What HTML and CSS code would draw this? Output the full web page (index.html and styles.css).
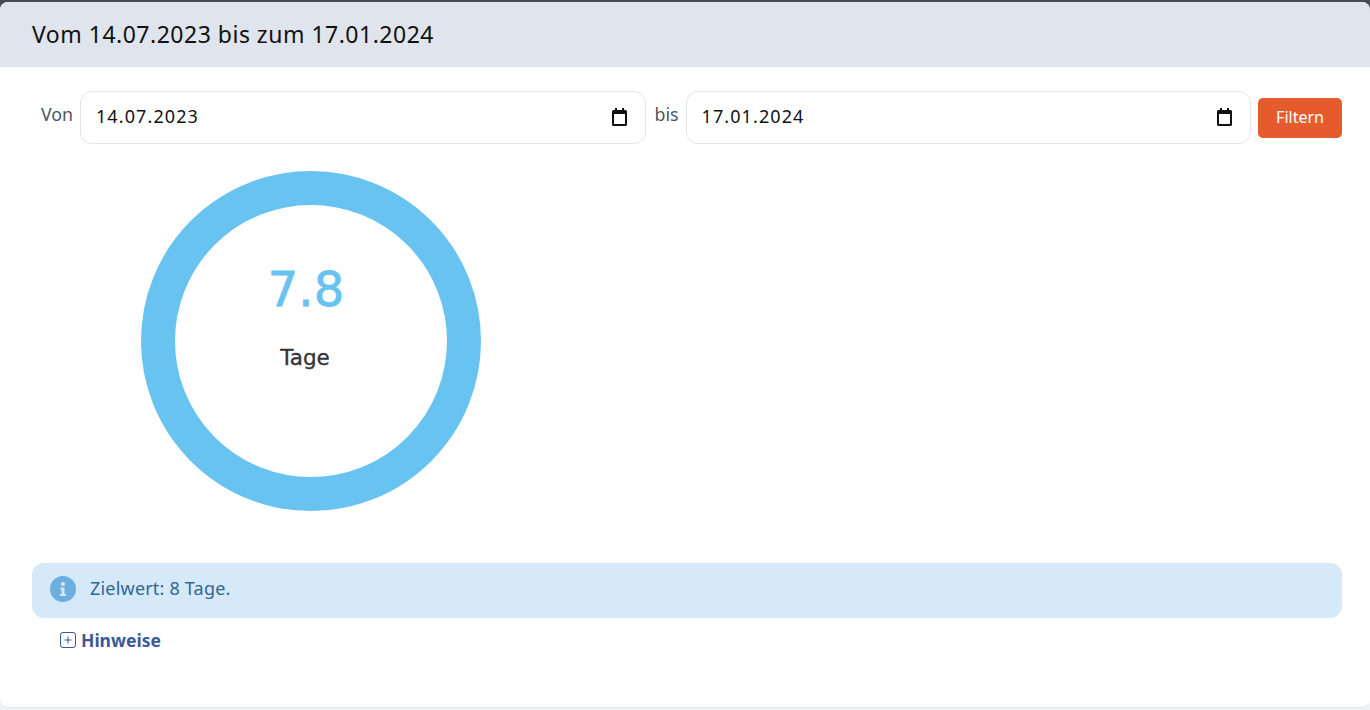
FILE: index.html
```html
<!DOCTYPE html>
<html lang="de">
<head>
<meta charset="utf-8">
<title>Zielwert</title>
<link rel="stylesheet" href="styles.css">
</head>
<body>
<main class="card">
  <header class="card-head"><span>Vom 14.07.2023 bis zum 17.01.2024</span></header>
  <section class="card-body">
    <form class="filter">
      <span class="label label-von">Von</span>
      <div class="date">
        <span class="date-text">14.07.2023</span>
        <svg class="cal" viewBox="0 0 15 18" width="15" height="18"><path d="M3 0h2v2h5V0h2v2h1.500A1.500 1.500 0 0 1 15 3.500v13a1.500 1.500 0 0 1-1.500 1.500h-12A1.500 1.500 0 0 1 0 16.500v-13A1.500 1.500 0 0 1 1.500 2H3zM2 6v10h11V6z"/></svg>
      </div>
      <span class="label label-bis">bis</span>
      <div class="date">
        <span class="date-text">17.01.2024</span>
        <svg class="cal" viewBox="0 0 15 18" width="15" height="18"><path d="M3 0h2v2h5V0h2v2h1.500A1.500 1.500 0 0 1 15 3.500v13a1.500 1.500 0 0 1-1.500 1.500h-12A1.500 1.500 0 0 1 0 16.500v-13A1.500 1.500 0 0 1 1.500 2H3zM2 6v10h11V6z"/></svg>
      </div>
      <button class="btn" type="button">Filtern</button>
    </form>
    <div class="chart">
      <svg class="gauge" viewBox="0 0 340 340" width="340" height="340">
        <circle cx="170" cy="170" r="153" fill="none" stroke="#68c3f0" stroke-width="34"/>
        <text class="gauge-value" x="165" y="135" text-anchor="middle">7.8</text>
        <text class="gauge-unit" x="164" y="194" text-anchor="middle">Tage</text>
      </svg>
    </div>
    <div class="alert">
      <svg class="info" viewBox="0 0 26 26" width="26" height="26"><circle cx="13" cy="13" r="13" fill="#6caee0"/><circle cx="13" cy="8" r="2" fill="#d6e9f8"/><path d="M10.500 11.500h4v6.500h1.500v2h-6v-2h1.500v-4.500h-1z" fill="#d6e9f8"/></svg>
      <span class="alert-text">Zielwert: 8 Tage.</span>
    </div>
    <div class="hint">
      <svg class="plus" viewBox="0 0 16 16" width="16" height="16"><rect x="0.500" y="0.500" width="15" height="15" rx="2.500" fill="none" stroke="#3b5998"/><path d="M8 4.500v7M4.500 8h7" stroke="#3b5998" fill="none"/></svg>
      <strong>Hinweise</strong>
    </div>
  </section>
</main>
</body>
</html>
```
FILE: styles.css
```css
* { box-sizing: border-box; }
html, body { height: 100%; }
body {
  margin: 0;
  height: 710px;
  overflow: hidden;
  background: linear-gradient(#454c57 0 20px, #f0f2f5 20px);
  font-family: "Noto Sans", "Open Sans", sans-serif;
  padding-top: 2px;
}
.card {
  height: 706px;
  background: #fff;
  border-radius: 8px;
  border-bottom: 1px solid #dfe3eb;
  overflow: hidden;
}
.card-head {
  height: 65px;
  background: #e0e4ec;
  padding: 0 32px 2px;
  display: flex;
  align-items: center;
  font-size: 23px;
  letter-spacing: 0.5px;
  color: #111;
}
.card-body {
  padding: 24px 28px 0 32px;
}
.filter {
  display: flex;
  align-items: center;
  height: 53px;
}
.label {
  font-size: 17.800px;
  color: #4d5562;
  padding-bottom: 8px;
}
.label-von { padding-left: 9px; width: 48px; }
.label-bis { width: 40px; padding-left: 9px; }
.date {
  height: 53px;
  width: 566px;
  border: 1px solid #e1e5ec;
  border-radius: 12px;
  display: flex;
  align-items: center;
  justify-content: space-between;
  padding: 0 18px 1px 15px;
  font-size: 18px;
  letter-spacing: 1.100px;
  color: #111;
}
.date-text { padding-bottom: 2px; }
.cal { fill: #111; }
.btn {
  margin-left: 7px;
  width: 84px;
  height: 40px;
  border: 0;
  border-radius: 5px;
  background: #e55b2d;
  color: #fff;
  font: 400 16px "Noto Sans", sans-serif;
  padding: 0 0 2px;
}
.chart {
  margin: 27px 0 0 109px;
  height: 340px;
}
.gauge { display: block; }
.gauge-value {
  font: 48px "DejaVu Sans", sans-serif;
  fill: #68c3f0;
  stroke: #68c3f0;
  stroke-width: 0.8px;
}
.gauge-unit {
  font: 21.500px "DejaVu Sans", sans-serif;
  fill: #333;
  stroke: #333;
  stroke-width: 0.3px;
}
.alert {
  margin-top: 52px;
  height: 55px;
  background: #d6e9f8;
  border-radius: 12px;
  display: flex;
  align-items: center;
  gap: 14px;
  padding: 0 18px 3px 18px;
  font-size: 18px;
  letter-spacing: 0.2px;
  color: #2f6796;
}
.info { flex: none; }
.alert-text { padding-bottom: 2px; }
.hint {
  display: flex;
  align-items: center;
  gap: 5px;
  margin: 12px 0 0 28px;
  height: 20px;
  font-size: 17.500px;
  color: #3b5998;
}
.hint strong { font-weight: 700; }
```
